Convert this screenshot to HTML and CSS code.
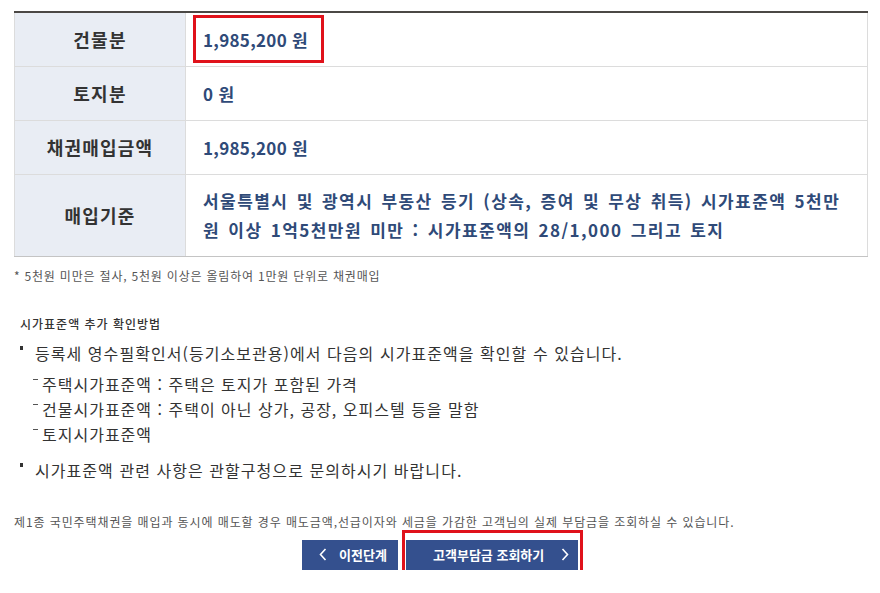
FILE: index.html
```html
<!DOCTYPE html>
<html lang="ko">
<head>
<meta charset="utf-8">
<link rel="stylesheet" href="styles.css">
</head>
<body>
<div class="page">
  <table class="bond">
    <tr>
      <th>건물분</th>
      <td><span class="amount marked">1,985,200 원</span></td>
    </tr>
    <tr>
      <th>토지분</th>
      <td><span class="amount">0 원</span></td>
    </tr>
    <tr>
      <th>채권매입금액</th>
      <td><span class="amount">1,985,200 원</span></td>
    </tr>
    <tr class="tall">
      <th>매입기준</th>
      <td>서울특별시 및 광역시 부동산 등기 (상속, 증여 및 무상 취득) 시가표준액 5천만원 이상 1억5천만원 미만 : 시가표준액의 28/1,000 그리고 토지</td>
    </tr>
  </table>
  <p class="note">* 5천원 미만은 절사, 5천원 이상은 올림하여 1만원 단위로 채권매입</p>

  <div class="guide">
    <h3 class="guide-title">시가표준액 추가 확인방법</h3>
    <ul class="dots">
      <li>등록세 영수필확인서(등기소보관용)에서 다음의 시가표준액을 확인할 수 있습니다.
        <ul class="dashes">
          <li>주택시가표준액 : 주택은 토지가 포함된 가격</li>
          <li>건물시가표준액 : 주택이 아닌 상가, 공장, 오피스텔 등을 말함</li>
          <li>토지시가표준액</li>
        </ul>
      </li>
      <li class="last">시가표준액 관련 사항은 관할구청으로 문의하시기 바랍니다.</li>
    </ul>
  </div>

  <p class="info">제1종 국민주택채권을 매입과 동시에 매도할 경우 매도금액,선급이자와 세금을 가감한 고객님의 실제 부담금을 조회하실 수 있습니다.</p>

  <div class="btns">
    <a class="btn prev" href="#">
      <svg class="chev" width="8" height="13" viewBox="0 0 8 13"><polyline points="6.5,1 1.5,6.5 6.5,12" fill="none" stroke="#fff" stroke-width="1.6"/></svg>
      <span>이전단계</span>
    </a>
    <a class="btn next marked-btn" href="#">
      <span>고객부담금 조회하기</span>
      <svg class="chev" width="8" height="13" viewBox="0 0 8 13"><polyline points="1.5,1 6.5,6.5 1.5,12" fill="none" stroke="#fff" stroke-width="1.6"/></svg>
    </a>
  </div>
</div>
</body>
</html>
```

FILE: styles.css
```css
* { box-sizing: border-box; }
html, body {
  margin: 0;
  padding: 0;
  background: #fff;
}
body {
  font-family: "Noto Sans CJK KR", "Noto Sans", sans-serif;
  color: #333;
}
.page {
  width: 880px;
  padding: 11px 12px 0 14px;
}
.bond {
  width: 854px;
  border-collapse: collapse;
  border-top: 2px solid #4b4845;
  border-left: 1px solid #dcdcdc;
  border-right: 1px solid #dcdcdc;
  border-bottom: 1px solid #c4c4c4;
}
.bond th, .bond td {
  border-bottom: 1px solid #dcdcdc;
  height: 54px;
  padding: 0;
  vertical-align: middle;
}
.bond th {
  width: 171px;
  background: #e9edf4;
  border-right: 1px solid #dcdcdc;
  font-size: 18px;
  font-weight: 700;
  color: #333;
  text-align: center;
  letter-spacing: 1.2px;
}
.bond td {
  padding-left: 17px;
  padding-right: 22px;
  font-size: 17px;
  font-weight: 700;
  color: #2f4a78;
  line-height: 29px;
  letter-spacing: 1.45px;
  word-spacing: 2px;
}
.bond tr.tall th, .bond tr.tall td {
  height: 82px;
  border-bottom: 1px solid #c4c4c4;
}
.amount {
  display: inline-block;
  position: relative;
  letter-spacing: 0.3px;
  word-spacing: 0;
}
.marked::after {
  content: "";
  position: absolute;
  left: -10px;
  right: -16px;
  top: -10px;
  bottom: -9px;
  border: 3px solid #e0121b;
}
.note {
  margin: 11px 0 0 0;
  font-size: 12px;
  color: #555;
  line-height: 16px;
  letter-spacing: 0.8px;
}
.guide {
  margin-top: 32px;
  padding-left: 6px;
}
.guide-title {
  margin: 0;
  font-size: 12px;
  font-weight: 500;
  color: #333;
  line-height: 16px;
  letter-spacing: 1px;
}
.dots {
  list-style: none;
  margin: 10px 0 0 0;
  padding: 0;
}
.dots > li {
  position: relative;
  padding-left: 15px;
  font-size: 16px;
  line-height: 22px;
  color: #333;
  letter-spacing: 1.05px;
}
.dots > li::before {
  content: "";
  position: absolute;
  left: 0;
  top: 4px;
  width: 3px;
  height: 4px;
  background: #333;
}
.dots > li.last {
  margin-top: 12px;
}
.dashes {
  list-style: none;
  margin: 8px 0 0 0;
  padding: 0;
}
.dashes > li {
  position: relative;
  padding-left: 7px;
  font-size: 16px;
  line-height: 25px;
  color: #333;
  letter-spacing: 1px;
}
.dashes > li::before {
  content: "";
  position: absolute;
  left: -2px;
  top: 7px;
  width: 5px;
  height: 1px;
  background: #555;
}
.info {
  margin: 33px 0 0 0;
  font-size: 12px;
  line-height: 16px;
  color: #555;
  letter-spacing: 0.9px;
}
.btns {
  display: flex;
  justify-content: center;
  gap: 8px;
  margin-top: 10px;
  margin-left: -14px;
  margin-right: -12px;
}
.btn {
  display: flex;
  align-items: center;
  height: 30px;
  background: #34508e;
  color: #fff;
  text-decoration: none;
  font-size: 13px;
  font-weight: 700;
  position: relative;
}
.btn.prev {
  width: 96px;
  padding-left: 17px;
  gap: 12px;
}
.btn.next {
  width: 172px;
  padding-left: 27px;
  gap: 17px;
}
.chev { display: block; }
.marked-btn::after {
  content: "";
  position: absolute;
  left: -4px;
  right: -5px;
  top: -10px;
  bottom: -7px;
  border: 3px solid #e0121b;
}
```
